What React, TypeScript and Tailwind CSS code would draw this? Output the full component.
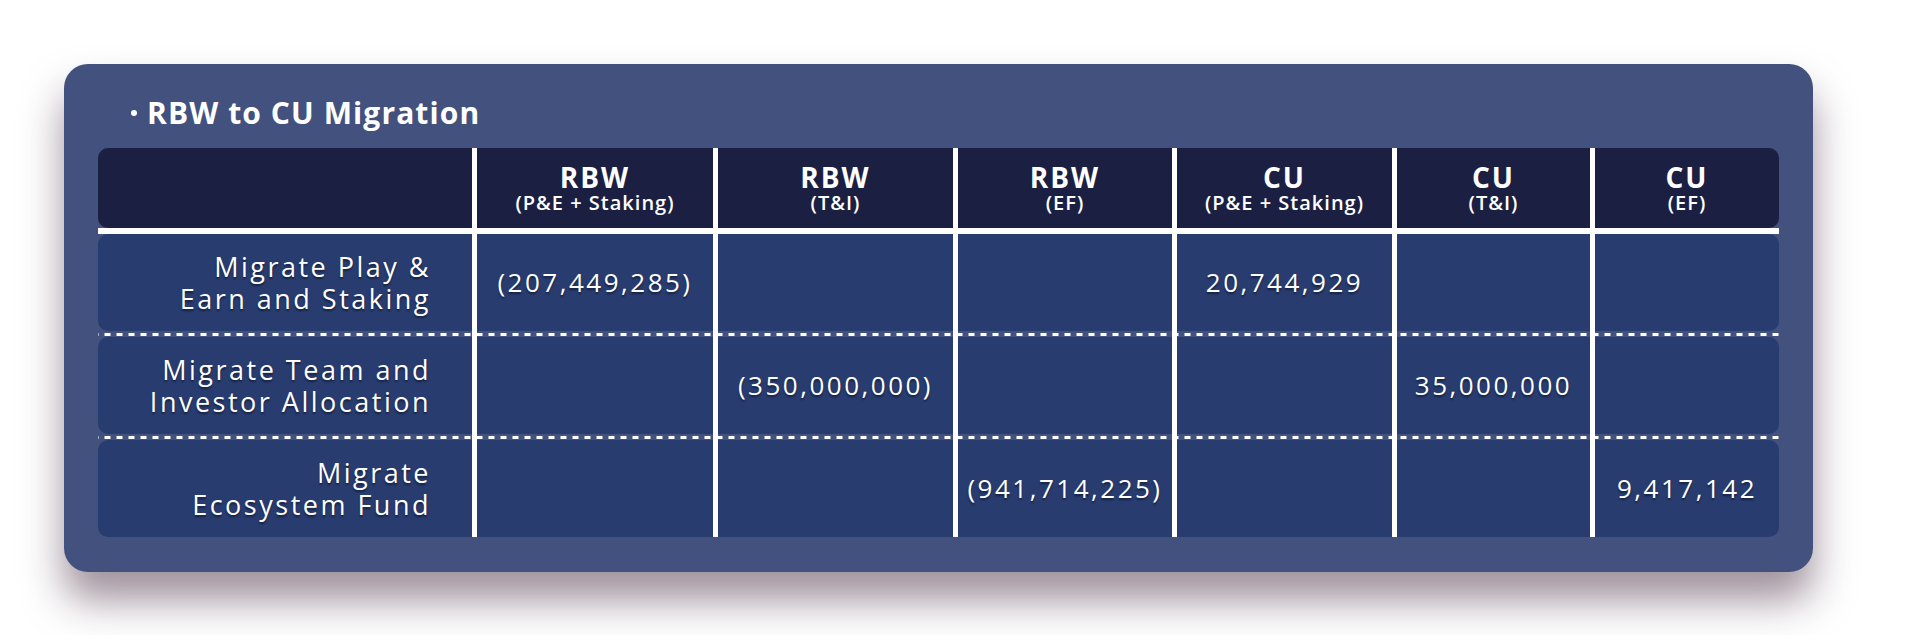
const headers = [
  { top: 'RBW', sub: '(P&E + Staking)' },
  { top: 'RBW', sub: '(T&I)' },
  { top: 'RBW', sub: '(EF)' },
  { top: 'CU', sub: '(P&E + Staking)' },
  { top: 'CU', sub: '(T&I)' },
  { top: 'CU', sub: '(EF)' },
]

const rows = [
  {
    label: ['Migrate Play &', 'Earn and Staking'],
    values: ['(207,449,285)', '', '', '20,744,929', '', ''],
  },
  {
    label: ['Migrate Team and', 'Investor Allocation'],
    values: ['', '(350,000,000)', '', '', '35,000,000', ''],
  },
  {
    label: ['Migrate', 'Ecosystem Fund'],
    values: ['', '', '(941,714,225)', '', '', '9,417,142'],
  },
]

// column template shared by every band so the white dividers line up
const cols = 'grid grid-cols-[374px_241px_240px_219px_220px_198px_189px]'
const divider = 'border-l-[5px] border-white'
const shadowText = '[text-shadow:0_2px_2px_rgba(0,0,0,0.45)]'

function DashedGap() {
  return (
    <div
      className={`${cols} h-[6px] bg-[linear-gradient(90deg,#fff_50%,transparent_50%)] bg-[length:12px_2.5px] bg-repeat-x bg-center`}
    >
      <div />
      {headers.map((_, i) => (
        <div key={i} className={divider} />
      ))}
    </div>
  )
}

export default function App() {
  return (
    <div className="min-h-screen bg-white p-16 font-['Open_Sans',sans-serif]">
      <div className="w-[1749px] rounded-[24px] bg-[#42517e] px-[34px] pt-[30px] pb-[35px] shadow-[0_28px_40px_rgba(80,55,75,0.55)]">
        <h2 className="mb-[16px] flex items-center gap-[10px] pl-[33px] text-[30px] font-bold leading-[38px] tracking-[1.1px] text-white">
          <span className="h-[6px] w-[6px] rounded-full bg-white" />
          RBW to CU Migration
        </h2>

        <div className="w-[1681px]">
          <div className={`${cols} h-[80px] overflow-hidden rounded-[10px] bg-[#1b1f42] text-white`}>
            <div />
            {headers.map((h, i) => (
              <div key={i} className={`${divider} flex flex-col items-center justify-center`}>
                <span className="text-[28px] font-bold leading-[30px] tracking-[2px]">{h.top}</span>
                <span className="text-[20px] font-semibold leading-[22px] tracking-[1px]">{h.sub}</span>
              </div>
            ))}
          </div>

          <div className="h-[6px] bg-white" />

          {rows.map((row, r) => (
            <div key={r}>
              {r > 0 && <DashedGap />}
              <div className={`${cols} h-[97px] overflow-hidden rounded-[10px] bg-[#283c70] text-white`}>
                <div className={`flex flex-col items-end justify-center pr-[41px] text-[27px] leading-[32px] tracking-[2.5px] ${shadowText}`}>
                  {row.label.map((l) => (
                    <span key={l}>{l}</span>
                  ))}
                </div>
                {row.values.map((v, i) => (
                  <div
                    key={i}
                    className={`${divider} flex items-center justify-center text-[26px] tracking-[2.5px] ${shadowText}`}
                  >
                    {v}
                  </div>
                ))}
              </div>
            </div>
          ))}
        </div>
      </div>
    </div>
  )
}
